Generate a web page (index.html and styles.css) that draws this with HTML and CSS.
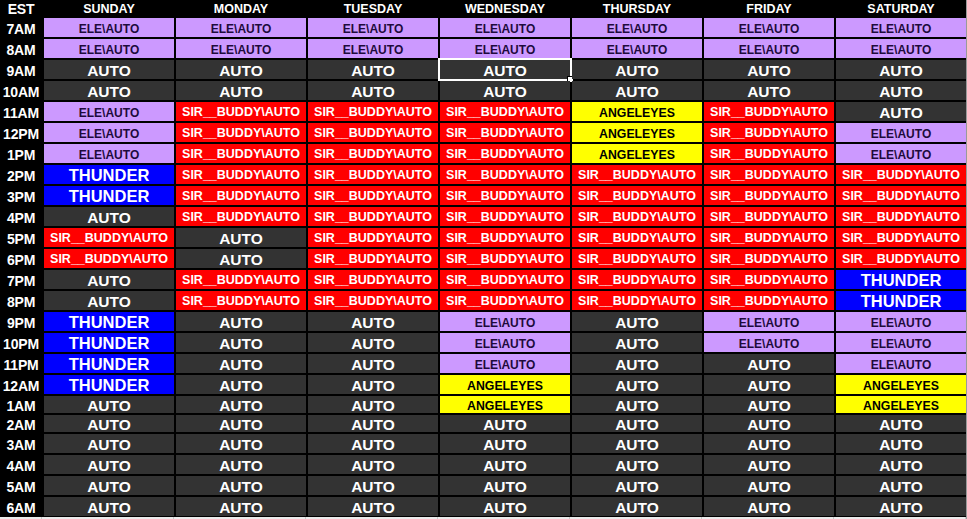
FILE: index.html
```html
<!DOCTYPE html>
<html>
<head>
<meta charset="utf-8">
<link rel="stylesheet" href="styles.css">
</head>
<body>
<div class="sheet">
<div class="grid">
<div class="h t">EST</div><div class="h">SUNDAY</div><div class="h">MONDAY</div><div class="h">TUESDAY</div><div class="h">WEDNESDAY</div><div class="h">THURSDAY</div><div class="h">FRIDAY</div><div class="h">SATURDAY</div>

<div class="t">7AM</div><div class="c e">ELE\AUTO</div><div class="c e">ELE\AUTO</div><div class="c e">ELE\AUTO</div><div class="c e">ELE\AUTO</div><div class="c e">ELE\AUTO</div><div class="c e">ELE\AUTO</div><div class="c e">ELE\AUTO</div>
<div class="t">8AM</div><div class="c e">ELE\AUTO</div><div class="c e">ELE\AUTO</div><div class="c e">ELE\AUTO</div><div class="c e">ELE\AUTO</div><div class="c e">ELE\AUTO</div><div class="c e">ELE\AUTO</div><div class="c e">ELE\AUTO</div>
<div class="t">9AM</div><div class="c a">AUTO</div><div class="c a">AUTO</div><div class="c a">AUTO</div><div class="c a sel">AUTO</div><div class="c a">AUTO</div><div class="c a">AUTO</div><div class="c a">AUTO</div>
<div class="t">10AM</div><div class="c a">AUTO</div><div class="c a">AUTO</div><div class="c a">AUTO</div><div class="c a">AUTO</div><div class="c a">AUTO</div><div class="c a">AUTO</div><div class="c a">AUTO</div>
<div class="t">11AM</div><div class="c e">ELE\AUTO</div><div class="c s">SIR__BUDDY\AUTO</div><div class="c s">SIR__BUDDY\AUTO</div><div class="c s">SIR__BUDDY\AUTO</div><div class="c g">ANGELEYES</div><div class="c s">SIR__BUDDY\AUTO</div><div class="c a">AUTO</div>
<div class="t">12PM</div><div class="c e">ELE\AUTO</div><div class="c s">SIR__BUDDY\AUTO</div><div class="c s">SIR__BUDDY\AUTO</div><div class="c s">SIR__BUDDY\AUTO</div><div class="c g">ANGELEYES</div><div class="c s">SIR__BUDDY\AUTO</div><div class="c e">ELE\AUTO</div>
<div class="t">1PM</div><div class="c e">ELE\AUTO</div><div class="c s">SIR__BUDDY\AUTO</div><div class="c s">SIR__BUDDY\AUTO</div><div class="c s">SIR__BUDDY\AUTO</div><div class="c g">ANGELEYES</div><div class="c s">SIR__BUDDY\AUTO</div><div class="c e">ELE\AUTO</div>
<div class="t">2PM</div><div class="c b">THUNDER</div><div class="c s">SIR__BUDDY\AUTO</div><div class="c s">SIR__BUDDY\AUTO</div><div class="c s">SIR__BUDDY\AUTO</div><div class="c s">SIR__BUDDY\AUTO</div><div class="c s">SIR__BUDDY\AUTO</div><div class="c s">SIR__BUDDY\AUTO</div>
<div class="t">3PM</div><div class="c b">THUNDER</div><div class="c s">SIR__BUDDY\AUTO</div><div class="c s">SIR__BUDDY\AUTO</div><div class="c s">SIR__BUDDY\AUTO</div><div class="c s">SIR__BUDDY\AUTO</div><div class="c s">SIR__BUDDY\AUTO</div><div class="c s">SIR__BUDDY\AUTO</div>
<div class="t">4PM</div><div class="c a">AUTO</div><div class="c s">SIR__BUDDY\AUTO</div><div class="c s">SIR__BUDDY\AUTO</div><div class="c s">SIR__BUDDY\AUTO</div><div class="c s">SIR__BUDDY\AUTO</div><div class="c s">SIR__BUDDY\AUTO</div><div class="c s">SIR__BUDDY\AUTO</div>
<div class="t">5PM</div><div class="c s">SIR__BUDDY\AUTO</div><div class="c a">AUTO</div><div class="c s">SIR__BUDDY\AUTO</div><div class="c s">SIR__BUDDY\AUTO</div><div class="c s">SIR__BUDDY\AUTO</div><div class="c s">SIR__BUDDY\AUTO</div><div class="c s">SIR__BUDDY\AUTO</div>
<div class="t">6PM</div><div class="c s">SIR__BUDDY\AUTO</div><div class="c a">AUTO</div><div class="c s">SIR__BUDDY\AUTO</div><div class="c s">SIR__BUDDY\AUTO</div><div class="c s">SIR__BUDDY\AUTO</div><div class="c s">SIR__BUDDY\AUTO</div><div class="c s">SIR__BUDDY\AUTO</div>
<div class="t">7PM</div><div class="c a">AUTO</div><div class="c s">SIR__BUDDY\AUTO</div><div class="c s">SIR__BUDDY\AUTO</div><div class="c s">SIR__BUDDY\AUTO</div><div class="c s">SIR__BUDDY\AUTO</div><div class="c s">SIR__BUDDY\AUTO</div><div class="c b">THUNDER</div>
<div class="t">8PM</div><div class="c a">AUTO</div><div class="c s">SIR__BUDDY\AUTO</div><div class="c s">SIR__BUDDY\AUTO</div><div class="c s">SIR__BUDDY\AUTO</div><div class="c s">SIR__BUDDY\AUTO</div><div class="c s">SIR__BUDDY\AUTO</div><div class="c b">THUNDER</div>
<div class="t">9PM</div><div class="c b">THUNDER</div><div class="c a">AUTO</div><div class="c a">AUTO</div><div class="c e">ELE\AUTO</div><div class="c a">AUTO</div><div class="c e">ELE\AUTO</div><div class="c e">ELE\AUTO</div>
<div class="t">10PM</div><div class="c b">THUNDER</div><div class="c a">AUTO</div><div class="c a">AUTO</div><div class="c e">ELE\AUTO</div><div class="c a">AUTO</div><div class="c e">ELE\AUTO</div><div class="c e">ELE\AUTO</div>
<div class="t">11PM</div><div class="c b">THUNDER</div><div class="c a">AUTO</div><div class="c a">AUTO</div><div class="c e">ELE\AUTO</div><div class="c a">AUTO</div><div class="c a">AUTO</div><div class="c e">ELE\AUTO</div>
<div class="t">12AM</div><div class="c b">THUNDER</div><div class="c a">AUTO</div><div class="c a">AUTO</div><div class="c g">ANGELEYES</div><div class="c a">AUTO</div><div class="c a">AUTO</div><div class="c g">ANGELEYES</div>
<div class="t">1AM</div><div class="c a">AUTO</div><div class="c a">AUTO</div><div class="c a">AUTO</div><div class="c g">ANGELEYES</div><div class="c a">AUTO</div><div class="c a">AUTO</div><div class="c g">ANGELEYES</div>
<div class="t">2AM</div><div class="c a">AUTO</div><div class="c a">AUTO</div><div class="c a">AUTO</div><div class="c a">AUTO</div><div class="c a">AUTO</div><div class="c a">AUTO</div><div class="c a">AUTO</div>
<div class="t">3AM</div><div class="c a">AUTO</div><div class="c a">AUTO</div><div class="c a">AUTO</div><div class="c a">AUTO</div><div class="c a">AUTO</div><div class="c a">AUTO</div><div class="c a">AUTO</div>
<div class="t">4AM</div><div class="c a">AUTO</div><div class="c a">AUTO</div><div class="c a">AUTO</div><div class="c a">AUTO</div><div class="c a">AUTO</div><div class="c a">AUTO</div><div class="c a">AUTO</div>
<div class="t">5AM</div><div class="c a">AUTO</div><div class="c a">AUTO</div><div class="c a">AUTO</div><div class="c a">AUTO</div><div class="c a">AUTO</div><div class="c a">AUTO</div><div class="c a">AUTO</div>
<div class="t">6AM</div><div class="c a">AUTO</div><div class="c a">AUTO</div><div class="c a">AUTO</div><div class="c a">AUTO</div><div class="c a">AUTO</div><div class="c a">AUTO</div><div class="c a">AUTO</div>
</div>
<div class="foot">
<div></div><div></div><div></div><div></div><div></div><div></div><div></div><div></div>
</div>
</div>
</body>
</html>
```

FILE: styles.css
```css
* { box-sizing: border-box; }
html, body {
  margin: 0;
  padding: 0;
  background: #ececec;
  font-family: "Liberation Sans", Arial, sans-serif;
  font-weight: bold;
}
.sheet {
  width: 967px;
  border-right: 1px solid #9a9a9a;
}
.grid {
  display: grid;
  grid-template-columns: 42px repeat(7, 130px);
  grid-template-rows: 16px repeat(18, 19px) 17px 17px repeat(4, 19px);
  column-gap: 2px;
  row-gap: 2px;
  background: #000;
  width: 966px;
  padding-bottom: 1px;
}
.h {
  color: #fff;
  font-size: 12.5px;
  display: flex;
  align-items: center;
  justify-content: center;
  background: #000;
  line-height: 1;
  padding-top: 3px;
}
.t {
  color: #fff;
  background: #000;
  font-size: 14px;
  display: flex;
  align-items: center;
  justify-content: center;
  line-height: 1;
  padding-top: 2px;
  letter-spacing: -0.2px;
}
.h.t { font-size: 14px; padding-top: 2px; }
.c {
  display: flex;
  align-items: center;
  justify-content: center;
  line-height: 1;
  padding-top: 2px;
  white-space: nowrap;
  position: relative;
}
.a { background: #333333; color: #fff; font-size: 15.5px; }
.e { background: #cc99ff; color: #1e0a3c; font-size: 12px; }
.s { background: #ff0000; color: #fff; font-size: 12.5px; }
.g { background: #ffff00; color: #000; font-size: 12.3px; padding-top: 4px; }
.b { background: #0000ff; color: #fff; font-size: 16.5px; }
.sel::before {
  content: "";
  position: absolute;
  left: -2px; top: -2px; right: -2px; bottom: -2px;
  border: 2px solid #fff;
}
.sel::after {
  content: "";
  position: absolute;
  right: -4px; bottom: -4px;
  width: 5px; height: 5px;
  background: #fff;
  border: 1px solid #000;
}
.foot {
  display: grid;
  grid-template-columns: 42px repeat(7, 130px);
  column-gap: 2px;
  height: 2px;
}
.foot div { border-right: 1px solid #c8c8c8; }
```
